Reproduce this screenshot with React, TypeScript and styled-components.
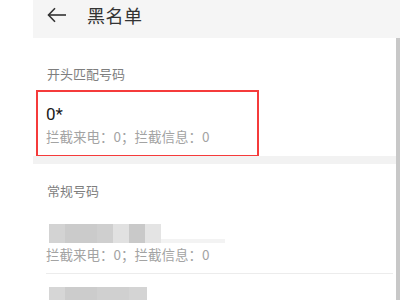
import React from "react";
import styled, { createGlobalStyle } from "styled-components";

const Global = createGlobalStyle`
  html, body { margin: 0; padding: 0; background: #ffffff; }
  body { width: 400px; height: 300px; overflow: hidden; font-family: "Noto Sans CJK SC", "Noto Sans", sans-serif; }
`;

const Page = styled.div`
  display: flex;
  width: 400px;
  height: 300px;
  overflow: hidden;
  background: #ffffff;
`;

const Gutter = styled.div`
  width: 33px;
  flex-shrink: 0;
  background: #ffffff;
`;

const Screen = styled.div`
  flex: 1;
  display: flex;
  flex-direction: column;
  min-width: 0;
`;

const Header = styled.div`
  height: 38px;
  flex-shrink: 0;
  background: #f5f5f5;
  display: flex;
  align-items: center;
  padding-left: 14px;
  padding-bottom: 8px;
  box-sizing: border-box;
`;

const Title = styled.div`
  margin-left: 20px;
  font-size: 18px;
  line-height: 22px;
  color: #333333;
  letter-spacing: 0.5px;
`;

const Body = styled.div`
  flex: 1;
  display: flex;
  flex-direction: column;
  background: #ffffff;
  border-right: 4px solid #c8c8c8;
`;

const Section = styled.div<{ $top: number }>`
  display: flex;
  flex-direction: column;
  padding-top: ${(p) => p.$top}px;
`;

const SectionLabel = styled.div`
  padding-left: 14px;
  font-size: 13px;
  line-height: 18px;
  color: #7e7e7e;
`;

const HighlightItem = styled.div`
  margin: 7px 0 0 3px;
  width: 223px;
  height: 67px;
  box-sizing: border-box;
  border: 2px solid #f53b3b;
  padding: 12px 0 0 8px;
  display: flex;
  flex-direction: column;
`;

const Number = styled.div`
  font-family: "Roboto", "Noto Sans CJK SC", sans-serif;
  font-size: 17px;
  line-height: 21px;
  color: #1a1a1a;
`;

const Stats = styled.div`
  margin-top: 2px;
  font-size: 13.5px;
  line-height: 18px;
  color: #a3a3a3;
`;

const Band = styled.div`
  height: 8px;
  margin-top: -1px;
  background: #f2f2f2;
`;

const Item = styled.div<{ $top: number }>`
  margin: ${(p) => p.$top}px 3px 0 13px;
  display: flex;
  flex-direction: column;
`;

const ItemStats = styled(Stats)`
  margin-top: 2px;
`;

const Divider = styled.div`
  margin: 10px 3px 0 13px;
  height: 1px;
  background: #ececec;
`;

const Mosaic = styled.div`
  display: flex;
  height: 19px;
  margin-left: 3px;
`;

const Tile = styled.div<{ $w: number; $c: string }>`
  width: ${(p) => p.$w}px;
  height: 100%;
  background: ${(p) => p.$c};
  filter: blur(0.6px);
`;

const Tail = styled.div`
  align-self: flex-end;
  width: 64px;
  height: 4px;
  background: #f3f3f3;
`;

const BackArrow = () => (
  <svg width="20" height="16" viewBox="0 0 20 16" fill="none">
    <path d="M1.5 8H19" stroke="#333" strokeWidth="1.6" />
    <path d="M8 1.3L1.5 8L8 14.7" stroke="#333" strokeWidth="1.6" fill="none" />
  </svg>
);

const tiles1 = [
  { w: 16, c: "#d3d3d3" },
  { w: 32, c: "#cbcbcb" },
  { w: 16, c: "#cfcfcf" },
  { w: 16, c: "#e1e1e1" },
  { w: 16, c: "#c9c9c9" },
  { w: 16, c: "#e4e4e4" },
];

const tiles2 = [
  { w: 16, c: "#d6d6d6" },
  { w: 32, c: "#cccccc" },
  { w: 32, c: "#d0d0d0" },
  { w: 18, c: "#d4d4d4" },
];

export default function App() {
  return (
    <Page>
      <Global />
      <Gutter />
      <Screen>
        <Header>
          <BackArrow />
          <Title>黑名单</Title>
        </Header>
        <Body>
          <Section $top={27}>
            <SectionLabel>开头匹配号码</SectionLabel>
            <HighlightItem>
              <Number>0*</Number>
              <Stats>拦截来电：0；拦截信息：0</Stats>
            </HighlightItem>
          </Section>
          <Band />
          <Section $top={18}>
            <SectionLabel>常规号码</SectionLabel>
            <Item $top={24}>
              <Mosaic>
                {tiles1.map((t, i) => (
                  <Tile key={i} $w={t.w} $c={t.c} />
                ))}
                <Tail />
              </Mosaic>
              <ItemStats>拦截来电：0；拦截信息：0</ItemStats>
            </Item>
            <Divider />
            <Item $top={13}>
              <Mosaic>
                {tiles2.map((t, i) => (
                  <Tile key={i} $w={t.w} $c={t.c} />
                ))}
              </Mosaic>
            </Item>
          </Section>
        </Body>
      </Screen>
    </Page>
  );
}
